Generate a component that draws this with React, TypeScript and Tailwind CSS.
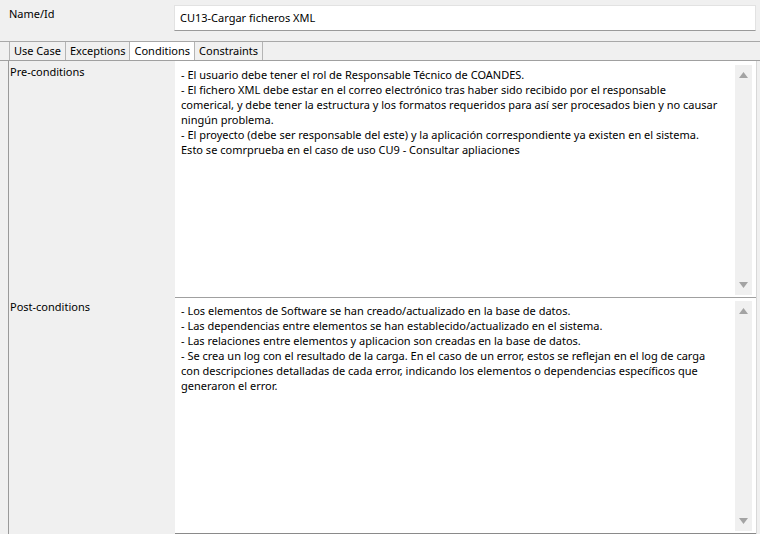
import React from "react";

const preLines = [
    "- El usuario debe tener el rol de Responsable Técnico de COANDES.",
    "- El fichero XML debe estar en el correo electrónico tras haber sido recibido por el responsable",
    "comerical, y debe tener la estructura y los formatos requeridos para así ser procesados bien y no causar",
    "ningún problema.",
    "- El proyecto (debe ser responsable del este) y la aplicación correspondiente ya existen en el sistema.",
    "Esto se comrprueba en el caso de uso CU9 - Consultar apliaciones",
];

const postLines = [
    "- Los elementos de Software se han creado/actualizado en la base de datos.",
    "- Las dependencias entre elementos se han establecido/actualizado en el sistema.",
    "- Las relaciones entre elementos y aplicacion son creadas en la base de datos.",
    "- Se crea un log con el resultado de la carga. En el caso de un error, estos se reflejan en el log de carga",
    "con descripciones detalladas de cada error, indicando los elementos o dependencias específicos que",
    "generaron el error.",
];

const tabs = ["Use Case", "Exceptions", "Conditions", "Constraints"];

function Arrow({ up }: { up?: boolean }) {
    return (
        <svg width="9" height="6" viewBox="0 0 9 6">
            {up ? <polygon points="0,6 4.5,0 9,6" fill="#a3a3a3" /> : <polygon points="0,0 4.5,6 9,0" fill="#a3a3a3" />}
        </svg>
    );
}

function TextArea({ lines, className }: { lines: string[]; className: string }) {
    return (
        <div className={`flex bg-white border-t border-[#a0a0a0] ${className}`}>
            <div className="flex-1 min-w-0 pl-[6px] pt-[5px] leading-[15px] text-[#000] overflow-hidden">
                {lines.map((l, i) => (
                    <div key={i} className="whitespace-nowrap">{l}</div>
                ))}
            </div>
            {/* scrollbar */}
            <div className="w-[17px] shrink-0 mt-[3px] mb-[2px] mr-[4px] bg-[#f0f0f0] flex flex-col items-center justify-between py-[7px]">
                <Arrow up />
                <Arrow />
            </div>
        </div>
    );
}

export default function App() {
    return (
        <div className="w-[760px] h-[534px] overflow-hidden bg-[#f0f0f0] text-[11px] text-black font-['Noto_Sans',sans-serif]">
            {/* Name/Id row */}
            <div className="flex pt-[5px] pl-[9px] pr-[4px]">
                <div className="w-[165px] shrink-0 pt-[1px]">Name/Id</div>
                <div className="flex-1 h-[26px] bg-white border border-[#e2e2e2] border-b-[#9a9a9a] flex items-center px-[5px]">
                    CU13-Cargar ficheros XML
                </div>
            </div>

            {/* Tabs */}
            <div className="mt-[10px] border-t border-[#a8a8a8] border-b border-b-[#a0a0a0] h-[20px] flex pl-[9px]">
                {tabs.map((t) => (
                    <div
                        key={t}
                        className={`h-full px-[4px] flex items-center border-r border-[#b4b4b4] first:border-l ${t === "Conditions" ? "bg-white" : "bg-[#f0f0f0]"}`}
                    >
                        {t}
                    </div>
                ))}
            </div>

            {/* Conditions */}
            <div className="flex ml-[8px] border-l border-[#9a9a9a] h-[473px]">
                <div className="w-[166px] shrink-0 flex flex-col">
                    <div className="h-[236px] pl-[1px] pt-[3px]">Pre-conditions</div>
                    <div className="flex-1 pl-[1px] pt-[2px]">Post-conditions</div>
                </div>
                <div className="flex-1 min-w-0 flex flex-col border-r border-[#d8d8d8] mr-[3px]">
                    <TextArea lines={preLines} className="h-[236px] border-t-white" />
                    <TextArea lines={postLines} className="flex-1 border-b border-b-[#8a8a8a]" />
                </div>
            </div>
        </div>
    );
}
